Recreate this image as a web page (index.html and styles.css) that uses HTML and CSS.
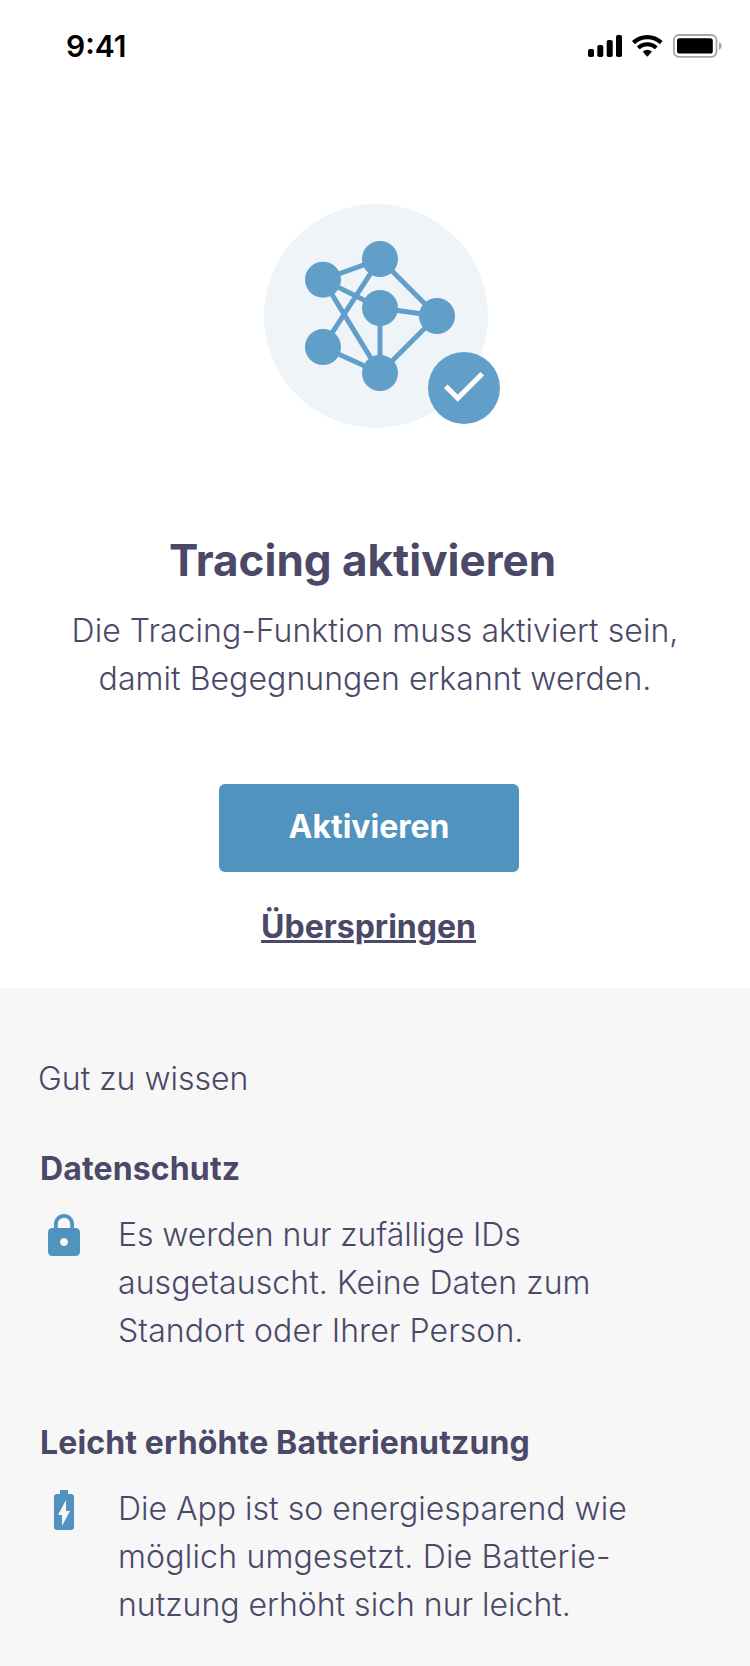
FILE: index.html
```html
<!DOCTYPE html>
<html lang="de">
<head>
<meta charset="utf-8">
<title>Tracing aktivieren</title>
<link rel="stylesheet" href="styles.css">
</head>
<body>
<header class="status-bar">
  <span class="time">9:41</span>
  <svg class="status-icons" width="134" height="24" viewBox="588 34 134 24">
    <rect x="588" y="49" width="6" height="8" rx="1.8"/>
    <rect x="597.3" y="45" width="6" height="12" rx="1.8"/>
    <rect x="606.7" y="40" width="6" height="17" rx="1.8"/>
    <rect x="616" y="35" width="6" height="22" rx="1.8"/>
    <path d="M633.4 42.6A20.4 20.4 0 0 1 661.2 42.6" fill="none" stroke="#000" stroke-width="4.2"/>
    <path d="M638.3 47.9A13.2 13.2 0 0 1 656.3 47.9" fill="none" stroke="#000" stroke-width="4"/>
    <path d="M642.7 51.5A7.8 7.8 0 0 1 651.9 51.5L647.9 56.2Q647.3 56.8 646.7 56.2Z"/>
    <rect x="673.9" y="35" width="42.6" height="21.8" rx="5" fill="none" stroke="#a6a6a6" stroke-width="1.8"/>
    <rect x="677" y="38.3" width="35.8" height="15.2" rx="2.6"/>
    <path d="M719 42A4.3 4.3 0 0 1 719 50Z" fill="#a6a6a6"/>
  </svg>
</header>
<main>
  <section class="hero">
    <svg class="network" width="236" height="224" viewBox="264 204 236 224">
      <circle cx="376" cy="316" r="112" fill="#eff4f9"/>
      <path d="M380 259L323 279.7L380 308L437 316L380 259L323 347L380 373L437 316M323 279.7L380 373V308" fill="none" stroke="#629fc8" stroke-width="5"/>
      <g fill="#629fc8">
        <circle cx="380" cy="259" r="18"/>
        <circle cx="323" cy="279.7" r="18"/>
        <circle cx="380" cy="308" r="18"/>
        <circle cx="437" cy="316" r="18"/>
        <circle cx="323" cy="347" r="18"/>
        <circle cx="380" cy="373" r="18"/>
        <circle cx="464" cy="388" r="36"/>
      </g>
      <path d="M445.8 386.2L457.7 398.2L482.2 373.8" fill="none" stroke="#fff" stroke-width="5.1"/>
    </svg>
    <h1 class="title">Tracing aktivieren</h1>
    <p class="lead">Die Tracing-Funktion muss aktiviert sein,<br>damit Begegnungen erkannt werden.</p>
    <button class="primary">Aktivieren</button>
    <a class="skip" href="#">Überspringen</a>
  </section>
  <section class="info">
    <p class="eyebrow">Gut zu wissen</p>
    <article class="item">
      <h2 class="item-title">Datenschutz</h2>
      <div class="item-body">
        <svg class="icon" width="48" height="48" viewBox="0 0 24 24"><path fill="#5093bf" d="M18 8h-1V6c0-2.76-2.24-5-5-5S7 3.240 7 6v2H6c-1.100 0-2 .9-2 2v10c0 1.100.9 2 2 2h12c1.100 0 2-.9 2-2V10c0-1.100-.9-2-2-2zm-6 9c-1.100 0-2-.9-2-2s.9-2 2-2 2 .9 2 2-.9 2-2 2zM15.100 8H8.900V6c0-1.710 1.390-3.100 3.100-3.100s3.100 1.390 3.100 3.100v2z"/></svg>
        <p><span class="tight">Es werden nur zufällige IDs</span><br><span class="loose">ausgetauscht. Keine Daten zum</span><br><span class="loose">Standort oder Ihrer Person.</span></p>
      </div>
    </article>
    <article class="item">
      <h2 class="item-title">Leicht erhöhte Batterienutzung</h2>
      <div class="item-body">
        <svg class="icon" width="48" height="48" viewBox="0 0 24 24"><path fill="#5093bf" d="M15.670 4H14V2h-4v2H8.330C7.600 4 7 4.600 7 5.330v15.330C7 21.400 7.600 22 8.330 22h7.330c.74 0 1.340-.6 1.340-1.330V5.330C17 4.600 16.400 4 15.670 4zM11 20v-5.500H9L13 7v5.500h2L11 20z"/></svg>
        <p>Die App ist so energiesparend wie<br><span class="looser">möglich umgesetzt. Die Batterie-</span><br>nutzung erhöht sich nur leicht.</p>
      </div>
    </article>
  </section>
</main>
</body>
</html>
```

FILE: styles.css
```css
* { box-sizing: border-box; }
body {
  margin: 0;
  width: 750px;
  height: 1666px;
  overflow: hidden;
  background: #fff;
  color: #4b4868;
  font: 300 32px/48px Inter, "Noto Sans", sans-serif;
  letter-spacing: 0;
}
p, h1, h2 { margin: 0; }
.tight { letter-spacing: -0.08px; }
.loose { letter-spacing: 0.09px; }
.looser { letter-spacing: 0.2px; }
.status-bar {
  display: flex;
  justify-content: space-between;
  height: 88px;
  padding: 28px 28px 0 66px;
  color: #000;
}
.time {
  font-size: 30px;
  font-weight: 600;
  line-height: 36px;
}
.status-icons { margin-top: 6px; }
.hero {
  display: flex;
  flex-direction: column;
  align-items: center;
  height: 900px;
  padding-top: 116px;
}
.network { margin-left: 14px; }
.title {
  margin: 105px 25px 20px 0;
  font-size: 44px;
  font-weight: 700;
  line-height: 54px;
}
.lead {
  text-align: center;
  letter-spacing: 0.05px;
}
.primary {
  width: 300px;
  height: 88px;
  margin: 81px 12px 0 0;
  padding: 0 0 2px;
  border: 0;
  border-radius: 6px;
  background: #5093bf;
  color: #fff;
  font: 700 32px/48px Inter, sans-serif;
}
.skip {
  margin: 31px 13px 0 0;
  color: inherit;
  font-weight: 700;
  text-underline-offset: 2px;
  text-decoration-thickness: 3px;
}
.info {
  height: 678px;
  padding: 67px 38px 0;
  background: #f7f7f7;
}
.eyebrow { margin-bottom: 42px; }
.item { margin-bottom: 64px; padding-left: 2px; }
.item-title {
  font-size: 32px;
  font-weight: 700;
  letter-spacing: 0.14px;
}
.item-body {
  display: flex;
  gap: 30px;
  margin-top: 18px;
}
.icon { margin-top: 1px; }
```
